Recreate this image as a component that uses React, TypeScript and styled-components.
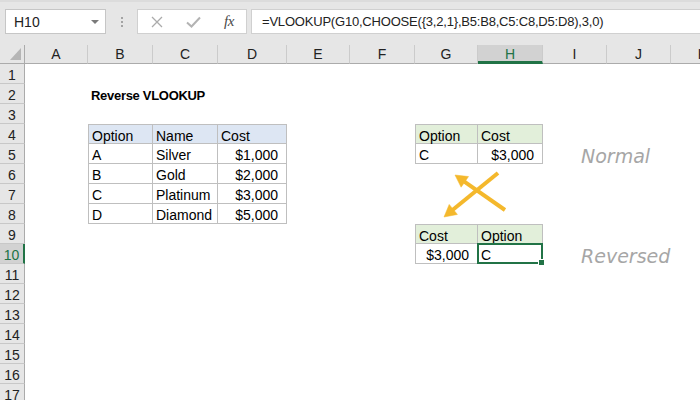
import React from 'react';
import styled, { createGlobalStyle } from 'styled-components';

const GlobalStyle = createGlobalStyle`
  html, body {
    margin: 0;
    padding: 0;
    background: #ffffff;
  }
  body {
    font-family: "Liberation Sans", Arial, sans-serif;
    font-size: 14px;
    color: #000;
  }
`;

const GREEN = '#217346';
const BLUE_FILL = '#dde6f3';
const GREEN_FILL = '#e2efda';
const TABLE_LINE = '#bfbfbf';
const ARROW = '#f4b82c';

const Window = styled.div`
  position: relative;
  width: 700px;
  height: 400px;
  overflow: hidden;
  background: #fff;
`;

/* ---------- formula bar ---------- */

const FormulaBar = styled.div`
  display: flex;
  align-items: flex-start;
  box-sizing: border-box;
  height: 45px;
  padding: 9px 0 0 5px;
  background: #e6e6e6;
  border-top: 2px solid #dcdcdc;
`;

const NameBox = styled.div`
  display: flex;
  align-items: center;
  justify-content: space-between;
  box-sizing: border-box;
  width: 101px;
  height: 25px;
  margin-top: -2px;
  padding: 0 6px 0 8px;
  background: #fff;
  border: 1px solid #c6c6c6;
  font-size: 14px;
  color: #222;
`;

const DropArrow = styled.span`
  width: 0;
  height: 0;
  border-left: 4px solid transparent;
  border-right: 4px solid transparent;
  border-top: 4px solid #7a7a7a;
`;

const Grip = styled.div`
  display: flex;
  flex-direction: column;
  align-items: center;
  justify-content: center;
  gap: 2px;
  width: 31px;
  height: 25px;
  margin-top: -2px;
`;

const GripDot = styled.span`
  width: 2px;
  height: 2px;
  background: #a3a3a3;
`;

const ButtonBox = styled.div`
  display: grid;
  grid-template-columns: repeat(3, 36px);
  align-items: center;
  justify-items: center;
  box-sizing: border-box;
  width: 110px;
  height: 25px;
  margin-top: -2px;
  padding-left: 1px;
  background: #fff;
  border: 1px solid #d0d0d0;
`;

const Fx = styled.span`
  font-family: "Liberation Serif", "Times New Roman", serif;
  font-style: italic;
  font-size: 15px;
  color: #4a4a4a;
  letter-spacing: -0.5px;
`;

const FormulaInput = styled.div`
  flex: 1;
  box-sizing: border-box;
  height: 25px;
  margin: -2px 0 0 4px;
  padding: 0 0 0 10px;
  background: #fff;
  border: 1px solid #d0d0d0;
  border-right: none;
  font-size: 13px;
  letter-spacing: -0.2px;
  line-height: 23px;
  color: #222;
  white-space: nowrap;
`;

/* ---------- sheet ---------- */

const COLS = ['A', 'B', 'C', 'D', 'E', 'F', 'G', 'H', 'I', 'J', 'K'];
const COL_WIDTHS = [63, 65, 65, 69, 63, 65, 63, 65, 64, 64, 64];
const ROW_COUNT = 17;
const SEL_COL = 'H';
const SEL_ROW = 10;

const Sheet = styled.div`
  display: grid;
  grid-template-columns: 25px ${COL_WIDTHS.map(w => `${w}px`).join(' ')};
  grid-template-rows: 19px;
  grid-auto-rows: 20px;
`;

const Corner = styled.div`
  position: relative;
  box-sizing: border-box;
  background: #e6e6e6;
  border-right: 1px solid #ababab;
  border-bottom: 1px solid #ababab;
`;

const CornerMark = styled.svg`
  position: absolute;
  right: 3px;
  bottom: 3px;
`;

const ColHeader = styled.div<{ $active?: boolean }>`
  box-sizing: border-box;
  background: ${p => (p.$active ? '#d2d2d2' : '#e6e6e6')};
  border-right: 1px solid #cbcbcb;
  border-bottom: ${p => (p.$active ? `3px solid ${GREEN}` : '1px solid #ababab')};
  color: ${p => (p.$active ? GREEN : '#222')};
  text-align: center;
  line-height: 18px;
  font-size: 14px;
`;

const RowHeader = styled.div<{ $active?: boolean }>`
  box-sizing: border-box;
  padding-top: 2px;
  background: ${p => (p.$active ? '#d2d2d2' : '#e6e6e6')};
  border-right: ${p => (p.$active ? `2px solid ${GREEN}` : '1px solid #ababab')};
  border-bottom: 1px solid #c8c8c8;
  color: ${p => (p.$active ? GREEN : '#222')};
  text-align: center;
  line-height: 18px;
  font-size: 14px;
`;

const Cell = styled.div<{
  $fill?: string;
  $right?: boolean;
  $boxed?: boolean;
  $top?: boolean;
  $left?: boolean;
}>`
  position: relative;
  box-sizing: border-box;
  padding: 3px ${p => (p.$right ? '8px' : '0')} 0 ${p => (p.$right ? '0' : '3px')};
  background: ${p => p.$fill || (p.$boxed ? '#fff' : 'transparent')};
  border-right: ${p => (p.$boxed ? `1px solid ${TABLE_LINE}` : 'none')};
  border-bottom: ${p => (p.$boxed ? `1px solid ${TABLE_LINE}` : 'none')};
  border-top: ${p => (p.$boxed && p.$top ? `1px solid ${TABLE_LINE}` : 'none')};
  border-left: ${p => (p.$boxed && p.$left ? `1px solid ${TABLE_LINE}` : 'none')};
  text-align: ${p => (p.$right ? 'right' : 'left')};
  line-height: 17px;
  font-size: 14px;
  white-space: nowrap;
  overflow: visible;
`;

const Title = styled.span`
  position: relative;
  z-index: 3;
  font-weight: 700;
  font-size: 13px;
  letter-spacing: -0.3px;
`;

const Note = styled.span`
  position: relative;
  z-index: 3;
  display: inline-block;
  padding: 1px 0 0 35px;
  font-family: "DejaVu Sans", sans-serif;
  font-weight: 200;
  font-style: italic;
  font-size: 19px;
  line-height: 17px;
  color: #a6a6a6;
`;

const Selection = styled.div`
  position: absolute;
  inset: -1px -1px -1px -1px;
  border: 2px solid ${GREEN};
  pointer-events: none;
  z-index: 2;
`;

const FillHandle = styled.span`
  position: absolute;
  right: -4px;
  bottom: -4px;
  width: 5px;
  height: 5px;
  background: ${GREEN};
  border: 1px solid #fff;
`;

const Overlay = styled.svg`
  position: absolute;
  left: 0;
  top: 0;
  pointer-events: none;
  z-index: 5;
`;

type CellSpec = {
  value: string;
  right?: boolean;
  fill?: string;
  kind?: 'title' | 'note';
};

const CELLS: Record<string, CellSpec> = {
  B2: { value: 'Reverse VLOOKUP', kind: 'title' },
  B4: { value: 'Option', fill: BLUE_FILL },
  C4: { value: 'Name', fill: BLUE_FILL },
  D4: { value: 'Cost', fill: BLUE_FILL },
  B5: { value: 'A' },
  C5: { value: 'Silver' },
  D5: { value: '$1,000', right: true },
  B6: { value: 'B' },
  C6: { value: 'Gold' },
  D6: { value: '$2,000', right: true },
  B7: { value: 'C' },
  C7: { value: 'Platinum' },
  D7: { value: '$3,000', right: true },
  B8: { value: 'D' },
  C8: { value: 'Diamond' },
  D8: { value: '$5,000', right: true },
  G4: { value: 'Option', fill: GREEN_FILL },
  H4: { value: 'Cost', fill: GREEN_FILL },
  G5: { value: 'C' },
  H5: { value: '$3,000', right: true },
  G9: { value: 'Cost', fill: GREEN_FILL },
  H9: { value: 'Option', fill: GREEN_FILL },
  G10: { value: '$3,000', right: true },
  H10: { value: 'C' },
  I5: { value: 'Normal', kind: 'note' },
  I10: { value: 'Reversed', kind: 'note' },
};

// bordered blocks: [firstCol, lastCol, firstRow, lastRow]
const TABLES: [number, number, number, number][] = [
  [1, 3, 4, 8],
  [6, 7, 4, 5],
  [6, 7, 9, 10],
];

const tableEdge = (col: number, row: number) => {
  const t = TABLES.find(([c1, c2, r1, r2]) => col >= c1 && col <= c2 && row >= r1 && row <= r2);
  if (!t) return null;
  return { top: row === t[2], left: col === t[0] };
};

const Arrow = ({ x1, y1, x2, y2 }: { x1: number; y1: number; x2: number; y2: number }) => {
  const dx = x2 - x1;
  const dy = y2 - y1;
  const len = Math.hypot(dx, dy);
  const ux = dx / len;
  const uy = dy / len;
  const bx = x2 - ux * 12;
  const by = y2 - uy * 12;
  const px = -uy * 6.5;
  const py = ux * 6.5;
  return (
    <g fill={ARROW} stroke={ARROW}>
      <line x1={x1} y1={y1} x2={bx + ux} y2={by + uy} strokeWidth={4} />
      <polygon points={`${x2},${y2} ${bx + px},${by + py} ${bx - px},${by - py}`} strokeWidth={0.5} />
    </g>
  );
};

const App: React.FC = () => {
  const rows = Array.from({ length: ROW_COUNT }, (_, i) => i + 1);

  return (
    <Window>
      <GlobalStyle />
      <FormulaBar>
        <NameBox>
          <span>H10</span>
          <DropArrow />
        </NameBox>
        <Grip>
          <GripDot />
          <GripDot />
          <GripDot />
        </Grip>
        <ButtonBox>
          <svg width="12" height="12" viewBox="0 0 12 12">
            <path d="M1 1 L11 11 M11 1 L1 11" stroke="#ababab" strokeWidth="1.3" fill="none" />
          </svg>
          <svg width="15" height="12" viewBox="0 0 15 12">
            <path d="M1 6.5 L5.5 10.5 L14 1.5" stroke="#b3b3b3" strokeWidth="2" fill="none" />
          </svg>
          <Fx>fx</Fx>
        </ButtonBox>
        <FormulaInput>=VLOOKUP(G10,CHOOSE({'{'}3,2,1{'}'},B5:B8,C5:C8,D5:D8),3,0)</FormulaInput>
      </FormulaBar>

      <Sheet>
        <Corner>
          <CornerMark width="11" height="12" viewBox="0 0 11 12">
            <polygon points="11,0 11,12 0,12" fill="#b5b5b5" />
          </CornerMark>
        </Corner>
        {COLS.map(c => (
          <ColHeader key={c} $active={c === SEL_COL}>
            {c}
          </ColHeader>
        ))}

        {rows.map(r => (
          <React.Fragment key={r}>
            <RowHeader $active={r === SEL_ROW}>{r}</RowHeader>
            {COLS.map((c, ci) => {
              const id = `${c}${r}`;
              const spec = CELLS[id];
              const edge = tableEdge(ci, r);
              const selected = c === SEL_COL && r === SEL_ROW;
              return (
                <Cell
                  key={id}
                  $fill={spec?.fill}
                  $right={spec?.right}
                  $boxed={!!edge}
                  $top={edge?.top}
                  $left={edge?.left}
                >
                  {spec?.kind === 'title' && <Title>{spec.value}</Title>}
                  {spec?.kind === 'note' && <Note>{spec.value}</Note>}
                  {spec && !spec.kind && spec.value}
                  {selected && (
                    <Selection>
                      <FillHandle />
                    </Selection>
                  )}
                </Cell>
              );
            })}
          </React.Fragment>
        ))}
      </Sheet>

      <Overlay width="700" height="400" viewBox="0 0 700 400">
        <Arrow x1={505} y1={210} x2={455} y2={175} />
        <Arrow x1={498} y1={173} x2={444} y2={217} />
      </Overlay>
    </Window>
  );
};

export default App;
